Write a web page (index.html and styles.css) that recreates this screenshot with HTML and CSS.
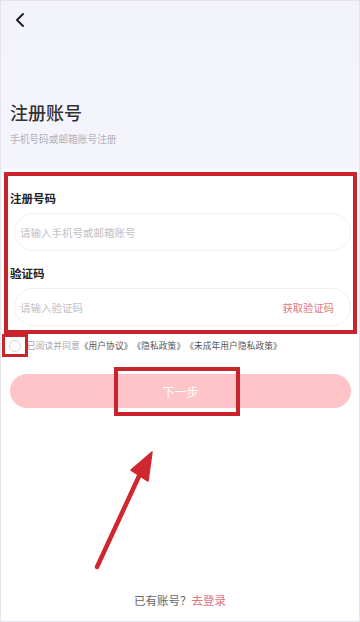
FILE: index.html
```html
<!DOCTYPE html>
<html lang="zh-CN">
<head>
<meta charset="utf-8">
<title>注册账号</title>
<link rel="stylesheet" href="styles.css">
</head>
<body>
<div class="page">
  <div class="nav">
    <svg class="back" width="12" height="16" viewBox="0 0 12 16"><polyline points="9,2 3,8 9,14" fill="none" stroke="#222" stroke-width="2" stroke-linecap="round" stroke-linejoin="round"/></svg>
  </div>
  <div class="head">
    <div class="title">注册账号</div>
    <div class="sub">手机号码或邮箱账号注册</div>
  </div>
  <div class="form">
    <div class="label">注册号码</div>
    <div class="input"><span class="ph">请输入手机号或邮箱账号</span></div>
    <div class="label l2">验证码</div>
    <div class="input"><span class="ph">请输入验证码</span><span class="code">获取验证码</span></div>
  </div>
  <div class="agree">
    <span class="check"></span>
    <span class="agree-text">已阅读并同意<em>《用户协议》《隐私政策》《未成年用户隐私政策》</em></span>
    <span class="mark-check"></span>
  </div>
  <div class="btn-wrap">
    <div class="btn">下一步</div>
    <span class="mark-btn"></span>
  </div>
  <div class="footer">已有账号？<span class="link">去登录</span></div>
  <svg class="arrow" width="360" height="622" viewBox="0 0 360 622">
    <line x1="97" y1="567" x2="140" y2="474" stroke="#d0262d" stroke-width="4.5" stroke-linecap="round"/>
    <polygon points="152,452 131,470 148,481" fill="#d0262d" stroke="#d0262d" stroke-width="1.5" stroke-linejoin="round"/>
  </svg>
</div>
</body>
</html>
```
FILE: styles.css
```css
* { box-sizing: border-box; }
html, body { margin: 0; padding: 0; }
body {
  font-family: "Noto Sans CJK SC", "Noto Sans", sans-serif;
  background: #fff;
}
.page {
  position: relative;
  width: 360px;
  height: 622px;
  display: flex;
  flex-direction: column;
  border: 1px solid #e4e4ea;
  background: linear-gradient(to bottom, #f3f3fb 0, #f4f4fb 166px, #ffffff 171px);
  overflow: hidden;
}
.nav {
  height: 40px;
  padding: 11px 0 0 13px;
}
.back { display: block; }
.head { padding: 59px 0 0 9px; height: 131px; }
.title {
  font-size: 18px;
  line-height: 24px;
  font-weight: 500;
  color: #333;
}
.sub {
  margin-top: 8px;
  font-size: 9.7px;
  line-height: 14px;
  color: #b2b2ba;
}
.form {
  margin: 0 2px 0 3px;
  border: 4px solid #c9232b;
  padding: 14px 0 4px 2px;
  background: #fff;
}
.label {
  font-size: 11.5px;
  line-height: 16px;
  font-weight: 700;
  color: #222;
}
.l2 { margin-top: 14px; }
.input {
  margin: 7px 2px 0 4px;
  height: 38px;
  border: 1px solid #f1eff2;
  border-radius: 19px;
  display: flex;
  align-items: center;
  justify-content: space-between;
  padding: 0 16px 0 5px;
}
.ph {
  font-size: 10.5px;
  color: #c0c0c6;
}
.code {
  font-size: 10.3px;
  color: #e27880;
}
.agree {
  position: relative;
  height: 22px;
  display: flex;
  align-items: center;
  padding-left: 8px;
  margin-top: 1px;
}
.check {
  width: 12px;
  height: 12px;
  border-radius: 50%;
  border: 1px solid #d8d8dc;
  background: #fff;
  flex: none;
}
.agree-text {
  margin-left: 6px;
  font-size: 8.7px;
  line-height: 12px;
  color: #a6a6ad;
  white-space: nowrap;
  text-spacing-trim: space-all;
  letter-spacing: 0.1px;
}
.agree-text em { font-style: normal; color: #555; }
.mark-check {
  position: absolute;
  left: 1px;
  top: -1px;
  width: 26px;
  height: 23px;
  border: 3px solid #c9232b;
}
.btn-wrap {
  position: relative;
  margin: 17px 8px 0 9px;
}
.btn {
  height: 34px;
  border-radius: 17px;
  background: #fec4c7;
  color: #fff;
  font-size: 12px;
  display: flex;
  align-items: center;
  justify-content: center;
}
.mark-btn {
  position: absolute;
  left: 104px;
  top: -7px;
  width: 126px;
  height: 49px;
  border: 4px solid #c9232b;
}
.footer {
  margin-top: auto;
  padding-bottom: 12px;
  text-align: center;
  font-size: 11.5px;
  line-height: 18px;
  color: #666;
}
.link { color: #e5707e; }
.arrow {
  position: absolute;
  left: -1px;
  top: -1px;
  pointer-events: none;
}
```
